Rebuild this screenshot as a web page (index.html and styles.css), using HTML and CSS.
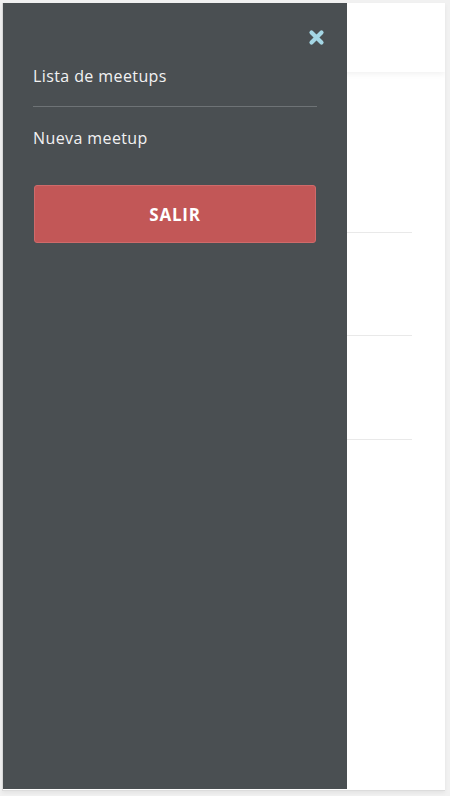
FILE: index.html
```html
<!DOCTYPE html>
<html lang="es">
<head>
<meta charset="utf-8">
<title>Meetups</title>
<link rel="stylesheet" href="styles.css">
</head>
<body>
<div class="frame">
  <header class="topbar"></header>
  <main class="content">
    <div class="item"></div>
    <div class="item"></div>
    <div class="item"></div>
  </main>
  <aside class="drawer">
    <div class="drawer-top">
      <button class="close" aria-label="Cerrar">
        <svg width="17" height="17" viewBox="0 0 17 17"><path d="M3.5 3.5L13.5 13.5M13.5 3.5L3.5 13.5" stroke="#a4d6e4" stroke-width="4.2" stroke-linecap="round"/></svg>
      </button>
    </div>
    <nav class="menu">
      <a class="menu-link first">Lista de meetups</a>
      <a class="menu-link">Nueva meetup</a>
    </nav>
    <button class="logout">SALIR</button>
  </aside>
</div>
</body>
</html>
```
FILE: styles.css
```css
* { box-sizing: border-box; }
html, body { margin: 0; padding: 0; }
body {
  background: #f1f1f1;
  width: 450px;
  height: 796px;
  padding: 3px 5px 6px 2px;
  font-family: "Open Sans", "Noto Sans", sans-serif;
}
.frame {
  position: relative;
  height: 788px;
  background: #fff;
  border-left: 1px solid #d8d8d8;
  border-bottom: 1px solid #dcdcdc;
  box-shadow: 0 2px 4px rgba(0,0,0,0.06);
  overflow: hidden;
}
.topbar {
  height: 69px;
  background: #fff;
  box-shadow: 0 2px 6px rgba(0,0,0,0.06);
}
.content {
  padding: 0 33px 0 35px;
  padding-top: 91px;
}
.item {
  height: 103px;
  border-bottom: 1px solid #e9e9e9;
}
.item:first-child { height: 70px; }
.item:last-child { height: 104px; }
.drawer {
  position: absolute;
  left: 0;
  top: 0;
  width: 344px;
  height: 786px;
  background: #4a4f52;
  padding: 26px 30px 0 30px;
  display: flex;
  flex-direction: column;
}
.drawer-top {
  display: flex;
  justify-content: flex-end;
  height: 20px;
}
.close {
  background: none;
  border: 0;
  padding: 0;
  margin-right: -8px;
  width: 17px;
  height: 17px;
  cursor: pointer;
}
.close svg { display: block; }
.menu {
  display: flex;
  flex-direction: column;
  margin-top: 16px;
}
.menu-link {
  color: #f2f2f2;
  font-size: 16px;
  font-weight: 400;
  line-height: 22px;
  letter-spacing: 0.4px;
  padding-bottom: 0;
}
.menu-link.first {
  padding-bottom: 19px;
  border-bottom: 1px solid #6e7376;
  margin-bottom: 20px;
}
.logout {
  margin-top: 36px;
  margin-left: 1px;
  margin-right: 1px;
  height: 58px;
  background: #c25757;
  border: 1px solid #cf6a6a;
  border-radius: 3px;
  color: #fff;
  font-family: "Open Sans", "Noto Sans", sans-serif;
  font-weight: 700;
  font-size: 17px;
  letter-spacing: 0.8px;
}
```
